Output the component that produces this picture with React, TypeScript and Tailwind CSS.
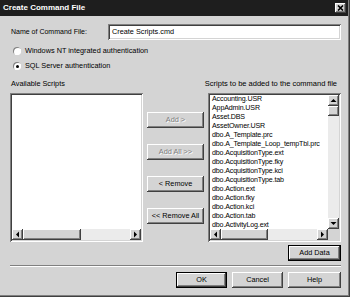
import React from "react";

const RAISED =
  "shadow-[inset_-1px_-1px_0_#404040,inset_1px_1px_0_#ffffff,inset_-2px_-2px_0_#808080,inset_2px_2px_0_#d4d4d4]";
const SUNKEN =
  "shadow-[inset_1px_1px_0_#808080,inset_-1px_-1px_0_#ffffff,inset_2px_2px_0_#404040,inset_-2px_-2px_0_#d4d4d4]";

type Dir = "up" | "down" | "left" | "right";
const PTS: Record<Dir, string> = {
  up: "0.5,5 6.5,5 3.5,2",
  down: "0.5,2 6.5,2 3.5,5",
  left: "5,0.5 5,6.5 2,3.5",
  right: "2,0.5 2,6.5 5,3.5",
};

function ArrowBtn({ dir }: { dir: Dir }) {
  return (
    <div className={`w-[11px] h-[11px] shrink-0 bg-[#d4d4d4] flex items-center justify-center ${RAISED}`}>
      <svg width="7" height="7" viewBox="0 0 7 7">
        <polygon points={PTS[dir]} fill="#000" />
      </svg>
    </div>
  );
}

function HScroll({ thumbW }: { thumbW: number }) {
  return (
    <div className="flex h-[11px] flex-1 min-w-0">
      <ArrowBtn dir="left" />
      <div className="flex-1 flex bg-[#ebebeb]">
        <div className={`h-[11px] bg-[#d4d4d4] ${RAISED}`} style={{ width: thumbW }} />
      </div>
      <ArrowBtn dir="right" />
    </div>
  );
}

function VScroll() {
  return (
    <div className="flex flex-col w-[11px] shrink-0">
      <ArrowBtn dir="up" />
      <div className="flex-1 flex flex-col bg-[#ebebeb]">
        <div className={`w-[11px] h-[10px] bg-[#d4d4d4] ${RAISED}`} />
      </div>
      <ArrowBtn dir="down" />
    </div>
  );
}

function Btn({
  children,
  w,
  disabled,
  def,
}: {
  children: React.ReactNode;
  w: string;
  disabled?: boolean;
  def?: boolean;
}) {
  return (
    <div
      className={`${w} h-[16px] shrink-0 bg-[#d4d4d4] flex items-center justify-center ${
        def ? "border border-black" : ""
      } ${RAISED} ${disabled ? "text-[#808080] [text-shadow:1px_1px_0_#ffffff]" : "text-black"}`}
    >
      {children}
    </div>
  );
}

function Radio({ checked, label }: { checked?: boolean; label: string }) {
  return (
    <div className="flex items-center h-[10px] pl-[3px]">
      <div className="w-[8px] h-[8px] rounded-full bg-white flex items-center justify-center shadow-[inset_1px_1px_0_#808080,inset_-1px_-1px_0_#ffffff]">
        {checked && <div className="w-[3px] h-[3px] rounded-full bg-black" />}
      </div>
      <span className="ml-[4px]">{label}</span>
    </div>
  );
}

const ITEMS = [
  "Accounting.USR",
  "AppAdmin.USR",
  "Asset.DBS",
  "AssetOwner.USR",
  "dbo.A_Template.prc",
  "dbo.A_Template_Loop_tempTbl.prc",
  "dbo.AcquisitionType.ext",
  "dbo.AcquisitionType.fky",
  "dbo.AcquisitionType.kci",
  "dbo.AcquisitionType.tab",
  "dbo.Action.ext",
  "dbo.Action.fky",
  "dbo.Action.kci",
  "dbo.Action.tab",
  "dbo.ActivityLog.ext",
];

export default function App() {
  return (
    <div className="w-[350px] h-[297px] bg-[#d4d4d4] flex flex-col font-['Liberation_Sans',Arial,sans-serif] text-[7.3px] text-black pr-[2px] pb-[2px] shadow-[inset_-1px_-1px_0_#404040,inset_-2px_-2px_0_#808080]">
      {/* Title bar */}
      <div className="h-[16px] flex items-center justify-between bg-[#1e1e1e] pl-[3px] pr-[2px]">
        <span className="text-white font-bold text-[8px]">Create Command File</span>
        <div className={`w-[11px] h-[10px] bg-[#d4d4d4] flex items-center justify-center ${RAISED}`}>
          <svg width="7" height="6" viewBox="0 0 7 6">
            <path d="M1 0.5 L6 5.5 M6 0.5 L1 5.5" stroke="#000" strokeWidth="1.6" />
          </svg>
        </div>
      </div>

      <div className="flex flex-col pl-[10px] pr-[7px]">
        {/* Name row */}
        <div className="flex items-center mt-[8px] h-[16px]">
          <span className="w-[98px] pl-[1px] text-[7px]">Name of Command File:</span>
          <div className={`flex-1 h-[16px] bg-white flex items-center pl-[4px] ${SUNKEN}`}>
            Create Scripts.cmd
          </div>
        </div>

        <div className="mt-[6px]">
          <Radio label="Windows NT integrated authentication" />
        </div>
        <div className="mt-[5px]">
          <Radio checked label="SQL Server authentication" />
        </div>

        <div className="flex justify-between items-center h-[10px] mt-[8px]">
          <span className="pl-[1px]">Available Scripts</span>
          <span className="pr-[4px] text-[7.5px]">Scripts to be added to the command file</span>
        </div>

        {/* Lists */}
        <div className="flex mt-[4px] h-[149px]">
          <div className={`w-[133px] h-[149px] p-[2px] flex flex-col ${SUNKEN}`}>
            <div className="flex-1 bg-white" />
            <div className="flex">
              <HScroll thumbW={58} />
            </div>
          </div>

          <div className="flex flex-col ml-[4px] pt-[19px] gap-[16px]">
            <Btn w="w-[57px]" disabled>
              Add &gt;
            </Btn>
            <Btn w="w-[57px]" disabled>
              Add All &gt;&gt;
            </Btn>
            <Btn w="w-[57px]">&lt; Remove</Btn>
            <Btn w="w-[57px]">&lt;&lt; Remove All</Btn>
          </div>

          <div className={`w-[133px] h-[149px] ml-[4px] p-[2px] flex flex-col ${SUNKEN}`}>
            <div className="flex flex-1 min-h-0">
              <div className="flex-1 bg-white overflow-hidden pl-[2px] leading-[9px] whitespace-nowrap text-[7.1px] tracking-[-0.15px]">
                {ITEMS.map((it) => (
                  <div key={it} className="h-[9px]">
                    {it}
                  </div>
                ))}
              </div>
              <VScroll />
            </div>
            <div className="flex">
              <HScroll thumbW={47} />
              <div className="w-[11px] h-[11px] bg-[#d4d4d4]" />
            </div>
          </div>
        </div>

        <div className="flex justify-end mt-[3px]">
          <Btn w="w-[53px]" def>
            Add Data
          </Btn>
        </div>

        <div className="mt-[4px] border-t border-t-[#808080] border-b border-b-white" />

        <div className="flex justify-end gap-[5px] mt-[5px]">
          <Btn w="w-[51px]" def>
            OK
          </Btn>
          <Btn w="w-[51px]">Cancel</Btn>
          <Btn w="w-[53px]">Help</Btn>
        </div>
      </div>
    </div>
  );
}
